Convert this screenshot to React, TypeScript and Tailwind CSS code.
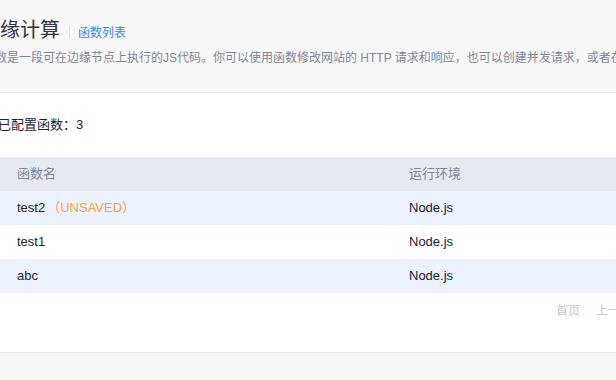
import React from 'react';

const rows = [
  { name: 'test2', unsaved: true, env: 'Node.js', striped: true },
  { name: 'test1', unsaved: false, env: 'Node.js', striped: false },
  { name: 'abc', unsaved: false, env: 'Node.js', striped: true },
];

export default function App() {
  return (
    <div
      className="w-[616px] h-[380px] overflow-hidden bg-[#f8f8f9] text-[#17233d]"
      style={{ fontFamily: '"Liberation Sans", "Noto Sans CJK SC", sans-serif' }}
    >
      {/* Page header */}
      <div className="h-[93px] border-b border-[#ebedf0] bg-[#f8f8f9]">
        <div className="ml-[-20px] pt-[18px] whitespace-nowrap">
          <div className="flex items-center h-[24px]">
            <h1 className="text-[20px] leading-[24px] text-[#2f3440] font-normal">边缘计算</h1>
            <span className="ml-[9px] mt-[4px] w-px h-[12px] bg-[#dcdee2]" />
            <a className="ml-[8px] mt-[5px] text-[12px] leading-[18px] text-[#2d8cf0]">函数列表</a>
          </div>
          <p className="mt-[7px] ml-[3px] text-[12px] leading-[18px] text-[#808695]">
            函数是一段可在边缘节点上执行的JS代码。你可以使用函数修改网站的 HTTP 请求和响应，也可以创建并发请求，或者在边缘节点上直接响应请求。
          </p>
        </div>
      </div>

      {/* Panel */}
      <div className="h-[260px] bg-white border-b border-[#ebedf0]">
        <div className="ml-[-2px] pt-[22px]">
          <div className="text-[13px] leading-[20px] text-[#17233d]">已配置函数：3</div>

          <table className="mt-[22px] w-[660px] border-collapse text-[13px]">
            <thead>
              <tr className="bg-[#e6e9f0] h-[34px]">
                <th className="w-[392px] pl-[19px] text-left font-normal text-[#808695]">函数名</th>
                <th className="pl-[19px] text-left font-normal text-[#808695]">运行环境</th>
              </tr>
            </thead>
            <tbody>
              {rows.map((r) => (
                <tr key={r.name} className={`h-[34px] ${r.striped ? 'bg-[#ebf2fd]' : 'bg-white'}`}>
                  <td className="pl-[19px] text-[#1f2329]">
                    {r.name}
                    {r.unsaved && <span className="text-[#f5a43a] ml-[2px]">（UNSAVED）</span>}
                  </td>
                  <td className="pl-[19px] text-[#1f2329]">{r.env}</td>
                </tr>
              ))}
            </tbody>
          </table>

          <div className="mt-[9px] flex gap-[16px] pl-[558px] text-[12px] leading-[18px] text-[#c5c8ce] whitespace-nowrap">
            <span>首页</span>
            <span>上一页</span>
          </div>
        </div>
      </div>
    </div>
  );
}
